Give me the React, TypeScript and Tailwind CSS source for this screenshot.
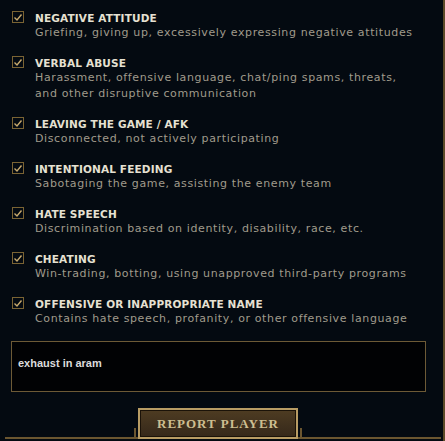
import React from "react";

const reasons = [
  { title: "NEGATIVE ATTITUDE", desc: ["Griefing, giving up, excessively expressing negative attitudes"] },
  {
    title: "VERBAL ABUSE",
    desc: ["Harassment, offensive language, chat/ping spams, threats,", "and other disruptive communication"],
  },
  { title: "LEAVING THE GAME / AFK", desc: ["Disconnected, not actively participating"] },
  { title: "INTENTIONAL FEEDING", desc: ["Sabotaging the game, assisting the enemy team"] },
  { title: "HATE SPEECH", desc: ["Discrimination based on identity, disability, race, etc."] },
  { title: "CHEATING", desc: ["Win-trading, botting, using unapproved third-party programs"] },
  { title: "OFFENSIVE OR INAPPROPRIATE NAME", desc: ["Contains hate speech, profanity, or other offensive language"] },
];

function Check() {
  return (
    <div className="flex h-[12px] w-[12px] shrink-0 items-center justify-center border border-[#7a6333]">
      <svg width="10" height="9" viewBox="0 0 10 9" fill="none">
        <path d="M1.5 4.5 L4 7 L8.5 1.5" stroke="#c8aa6e" strokeWidth="1.4" />
      </svg>
    </div>
  );
}

export default function App() {
  return (
    <div className="relative h-[441px] w-[445px] overflow-hidden bg-[#040a11]" style={{ fontFamily: "'DejaVu Sans', sans-serif" }}>
      <div className="absolute right-0 top-0 h-full w-[2px] bg-[#5c4a28]" />
      <div className="flex flex-col gap-[15px] pl-[12px] pt-[11px]">
        {reasons.map((r) => (
          <div key={r.title} className="flex gap-[11px]">
            <Check />
            <div className="flex flex-col">
              <div className="text-[10.5px] font-bold leading-[14px] tracking-[0.15px] text-[#e6e1d2]">{r.title}</div>
              {r.desc.map((d) => (
                <div key={d} className="text-[11px] leading-[16px] tracking-[0.62px] text-[#a09b8c]">
                  {d}
                </div>
              ))}
            </div>
          </div>
        ))}
      </div>
      <div className="mx-[11px] mt-[14px] h-[51px] w-[415px] border border-[#6d5a36] bg-[#010204] px-[6px] pt-[8px]">
        <span className="text-[11px] font-bold text-[#dcdcdc]" style={{ fontFamily: "'Liberation Sans', sans-serif" }}>
          exhaust in aram
        </span>
      </div>
      <div className="absolute bottom-[2px] left-[5px] right-[4px] h-[2px] bg-[#6b5630]" />
      <div className="absolute bottom-[3px] left-[134px] h-[10px] w-[2px] bg-[#6b5630]" />
      <div className="absolute bottom-[3px] left-[300px] h-[10px] w-[2px] bg-[#6b5630]" />
      <div className="absolute left-[138px] top-[408px] flex h-[31px] w-[160px] items-center justify-center border-2 border-[#b89c64] bg-gradient-to-b from-[#4e3c22] to-[#35281a] shadow-[inset_0_0_0_1px_#1a1208]">
        <span className="text-[13px] font-bold tracking-[1px] text-[#cdbe91]" style={{ fontFamily: "'Liberation Serif', serif" }}>
          REPORT PLAYER
        </span>
      </div>
    </div>
  );
}
